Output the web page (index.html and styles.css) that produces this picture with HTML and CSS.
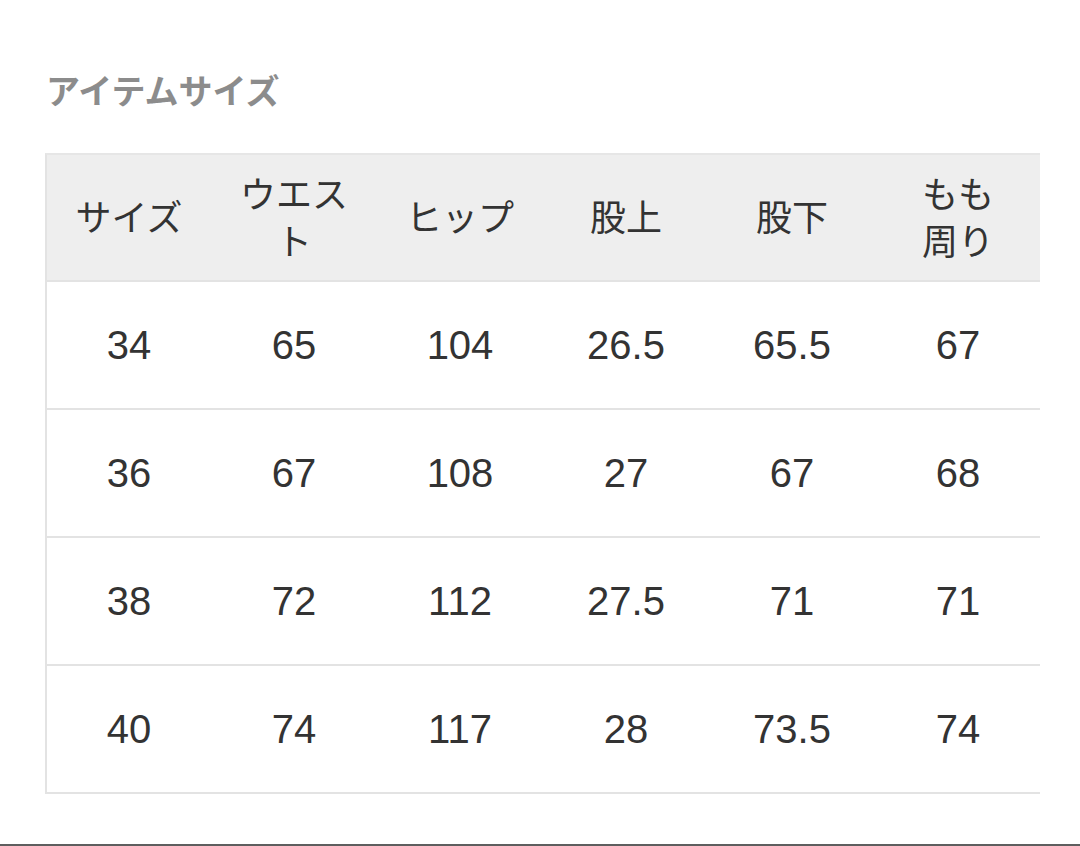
FILE: index.html
```html
<!DOCTYPE html>
<html lang="ja">
<head>
<meta charset="utf-8">
<title>アイテムサイズ</title>
<link rel="stylesheet" href="styles.css">
</head>
<body>
<main class="page">
  <h2 class="title">アイテムサイズ</h2>
  <div class="table-wrap">
    <table class="size-table">
      <thead>
        <tr>
          <th>サイズ</th>
          <th>ウエスト</th>
          <th>ヒップ</th>
          <th>股上</th>
          <th>股下</th>
          <th>もも<br>周り</th>
        </tr>
      </thead>
      <tbody>
        <tr><td>34</td><td>65</td><td>104</td><td>26.5</td><td>65.5</td><td>67</td></tr>
        <tr><td>36</td><td>67</td><td>108</td><td>27</td><td>67</td><td>68</td></tr>
        <tr><td>38</td><td>72</td><td>112</td><td>27.5</td><td>71</td><td>71</td></tr>
        <tr><td>40</td><td>74</td><td>117</td><td>28</td><td>73.5</td><td>74</td></tr>
      </tbody>
    </table>
  </div>
  <div class="divider"></div>
</main>
</body>
</html>
```
FILE: styles.css
```css
html, body {
  margin: 0;
  padding: 0;
  background: #ffffff;
}

.page {
  padding-top: 69px;
  font-family: "Liberation Sans", "Noto Sans CJK JP", sans-serif;
}

.title {
  margin: 0 0 0 46px;
  font-family: "Noto Sans CJK JP", sans-serif;
  font-size: 34px;
  line-height: 42px;
  font-weight: 700;
  color: #8c8c8c;
}

.table-wrap {
  margin: 42px 0 0 45px;
  width: 995px;
  overflow: hidden;
}

.size-table {
  border-collapse: separate;
  border-spacing: 0;
  table-layout: fixed;
  width: 996px;
  color: #333333;
}

.size-table th,
.size-table td {
  width: 166px;
  box-sizing: border-box;
  padding: 0 16px;
  text-align: center;
  vertical-align: middle;
  border-bottom: 2px solid #e3e3e3;
}

.size-table th:first-child,
.size-table td:first-child {
  border-left: 2px solid #e3e3e3;
}

.size-table th {
  height: 129px;
  padding-bottom: 4px;
  background: #eeeeee;
  border-top: 2px solid #e6e6e6;
  font-family: "Noto Sans CJK JP", sans-serif;
  font-size: 36px;
  font-weight: 400;
  line-height: 47px;
}

.size-table td {
  height: 128px;
  font-size: 40px;
  line-height: 46px;
}

.divider {
  margin-top: 50px;
  height: 2px;
  background: #5e5e5e;
}
```
